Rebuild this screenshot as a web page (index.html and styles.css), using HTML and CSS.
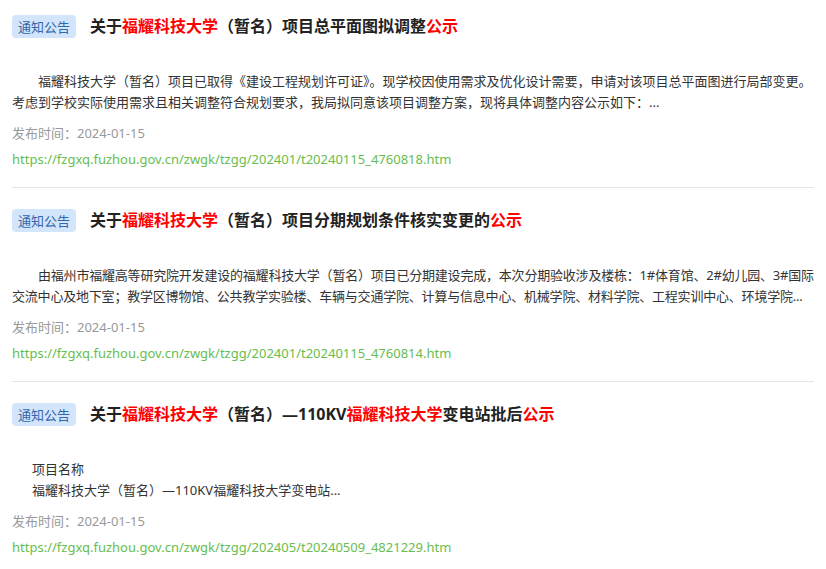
FILE: index.html
```html
<!DOCTYPE html>
<html lang="zh-CN">
<head>
<meta charset="utf-8">
<title>通知公告</title>
<link rel="stylesheet" href="styles.css">
</head>
<body>
<ul class="list">
  <li class="item">
    <div class="head">
      <span class="tag">通知公告</span>
      <h3 class="title">关于<em>福耀科技大学</em>（暂名）项目总平面图拟调整<em>公示</em></h3>
    </div>
    <p class="summary indent">福耀科技大学（暂名）项目已取得《建设工程规划许可证》。现学校因使用需求及优化设计需要，申请对该项目总平面图进行局部变更。<br>考虑到学校实际使用需求且相关调整符合规划要求，我局拟同意该项目调整方案，现将具体调整内容公示如下：...</p>
    <div class="date">发布时间：2024-01-15</div>
    <a class="url" href="#">https://fzgxq.fuzhou.gov.cn/zwgk/tzgg/202401/t20240115_4760818.htm</a>
  </li>
  <li class="item">
    <div class="head">
      <span class="tag">通知公告</span>
      <h3 class="title">关于<em>福耀科技大学</em>（暂名）项目分期规划条件核实变更的<em>公示</em></h3>
    </div>
    <p class="summary indent tight">由福州市福耀高等研究院开发建设的福耀科技大学（暂名）项目已分期建设完成，本次分期验收涉及楼栋：1#体育馆、2#幼儿园、3#国际<br>交流中心及地下室；教学区博物馆、公共教学实验楼、车辆与交通学院、计算与信息中心、机械学院、材料学院、工程实训中心、环境学院...</p>
    <div class="date">发布时间：2024-01-15</div>
    <a class="url" href="#">https://fzgxq.fuzhou.gov.cn/zwgk/tzgg/202401/t20240115_4760814.htm</a>
  </li>
  <li class="item">
    <div class="head">
      <span class="tag">通知公告</span>
      <h3 class="title">关于<em>福耀科技大学</em>（暂名）—110KV<em>福耀科技大学</em>变电站批后<em>公示</em></h3>
    </div>
    <p class="summary inset">项目名称<br>福耀科技大学（暂名）—110KV福耀科技大学变电站...</p>
    <div class="date">发布时间：2024-01-15</div>
    <a class="url" href="#">https://fzgxq.fuzhou.gov.cn/zwgk/tzgg/202405/t20240509_4821229.htm</a>
  </li>
</ul>
</body>
</html>
```

FILE: styles.css
```css
html, body {
  margin: 0;
  padding: 0;
  background: #ffffff;
}

body {
  font-family: "Noto Sans", "Noto Sans CJK SC", sans-serif;
  font-size: 13px;
  color: #333333;
}

.list {
  list-style: none;
  margin: 0;
  padding: 0 12px;
}

.item {
  display: flex;
  flex-direction: column;
  align-items: flex-start;
  padding: 21px 0 18px;
  border-bottom: 1px solid #e6e6e6;
}

.item:first-child {
  padding-top: 15px;
}

.item:last-child {
  border-bottom: none;
}

.head {
  display: flex;
  align-items: center;
  gap: 14px;
  height: 23px;
}

.tag {
  display: inline-flex;
  align-items: center;
  justify-content: center;
  width: 64px;
  height: 23px;
  box-sizing: border-box;
  border-radius: 4px;
  background: #d3e5fb;
  color: #3467ab;
  font-family: "Noto Sans CJK SC", sans-serif;
  font-size: 13px;
  line-height: 1;
}

.title {
  margin: 0;
  font-family: "Noto Sans", "Noto Sans CJK SC", sans-serif;
  font-size: 16px;
  font-weight: 700;
  color: #222222;
  line-height: 23px;
}

.title em {
  font-style: normal;
  color: #ff0000;
}

.summary {
  margin: 33px 0 0;
  width: 100%;
  line-height: 21px;
  white-space: nowrap;
  overflow: hidden;
  color: #333333;
}

.summary.indent {
  text-indent: 26px;
}

.summary.tight {
  letter-spacing: -0.2px;
}

.summary.inset {
  padding-left: 20px;
  box-sizing: border-box;
}

.date {
  margin-top: 10px;
  line-height: 20px;
  color: #999999;
}

.url {
  margin-top: 6px;
  line-height: 20px;
  color: #67bd4f;
  text-decoration: none;
}
```
